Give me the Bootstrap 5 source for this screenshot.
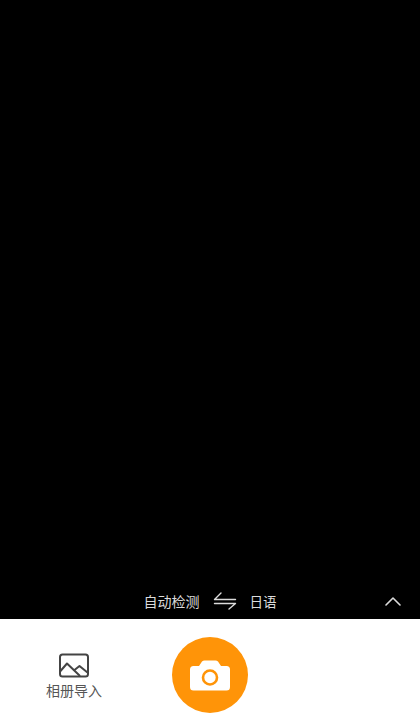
<!DOCTYPE html>
<html lang="zh">
<head>
<meta charset="utf-8">
<title>拍照翻译</title>
<link rel="stylesheet" href="https://cdn.jsdelivr.net/npm/bootstrap@5.3.0/dist/css/bootstrap.min.css">
<style>
html, body { height: 100%; }
body { background: #000; font-family: "Noto Sans CJK SC", "Liberation Sans", sans-serif; }
.screen { height: 728px; width: 420px; }
.viewfinder { background: #000; }
.lang-bar { display: grid; grid-template-columns: 1fr auto 1fr; align-items: center; height: 36px; color: #dcdcdc; font-size: 14px; line-height: 20px; }
.lang-pick { gap: 14px; }
.lang-to { font-size: 13.5px; }
.swap-icon { width: 24px; height: 20px; display: block; margin-right: -1px; margin-left: -1px; }
.chev-slot { padding-right: 19px; }
.chev { width: 16px; height: 10px; display: block; margin-top: -1px; }
.dock { height: 109px; background: #fff; display: grid; grid-template-columns: 172px 76px 1fr; }
.album { padding-top: 34px; color: #555; font-size: 14px; line-height: 20px; width: 148px; gap: 2px; }
.album-icon { width: 32px; height: 25px; display: block; }
.shutter { width: 76px; height: 76px; margin-top: 18px; background: #ff9408; border: 0; padding: 0; }
.cam-icon { width: 40px; height: 31px; display: block; }
</style>
</head>
<body>
<div class="screen d-flex flex-column">
  <div class="viewfinder flex-grow-1 d-flex flex-column justify-content-end">
    <div class="lang-bar">
      <span></span>
      <div class="lang-pick d-flex align-items-center">
        <span>自动检测</span>
        <svg class="swap-icon" viewBox="0 0 24 20" fill="none" stroke="#dcdcdc" stroke-width="1.4" stroke-linecap="round" stroke-linejoin="round"><path d="M8 2L1.500 8.500H22.500"/><path d="M1.500 12.500H22.500L16 18"/></svg>
        <span class="lang-to">日语</span>
      </div>
      <div class="chev-slot d-flex justify-content-end">
        <svg class="chev" viewBox="0 0 16 10" fill="none" stroke="#dcdcdc" stroke-width="1.6" stroke-linecap="round" stroke-linejoin="round"><path d="M1 9L8 2L15 9"/></svg>
      </div>
    </div>
  </div>
  <div class="dock">
    <div class="album d-flex flex-column align-items-center">
      <svg class="album-icon" viewBox="0 0 32 25" fill="none" stroke="#444" stroke-width="2" stroke-linejoin="round" stroke-linecap="round"><rect x="2" y="1.500" width="28" height="22" rx="2.500"/><path d="M2.500 18L9 10.500L21.500 22.500"/><path d="M16.500 17L21.500 13L29.500 19.500"/></svg>
      <span>相册导入</span>
    </div>
    <button type="button" class="shutter rounded-circle d-flex align-items-center justify-content-center" aria-label="拍照">
      <svg class="cam-icon" viewBox="0 0 40 31" aria-hidden="true"><path fill="#fff" d="M3.500 6H9L12 1.500Q13 .5 14.500 .5H25.500Q27 .5 28 1.500L31 6H36.500Q40 6 40 9.500V27Q40 30.500 36.500 30.500H3.500Q0 30.500 0 27V9.500Q0 6 3.500 6Z"/><circle cx="20" cy="17.500" r="7" fill="none" stroke="#ff9408" stroke-width="2.600"/></svg>
    </button>
    <div></div>
  </div>
</div>
<script src="https://cdn.jsdelivr.net/npm/bootstrap@5.3.0/dist/js/bootstrap.bundle.min.js"></script>
</body>
</html>
